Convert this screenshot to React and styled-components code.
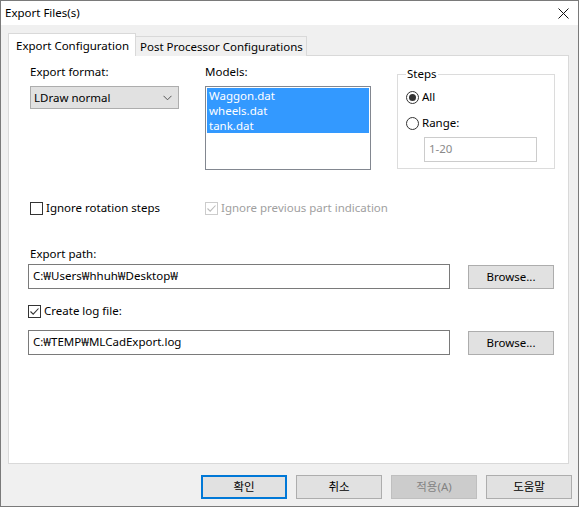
import React from "react";
import styled, { createGlobalStyle, css } from "styled-components";

const GlobalStyle = createGlobalStyle`
  html, body {
    margin: 0;
    padding: 0;
    background: #ffffff;
  }
  body {
    font-family: "Noto Sans", "Noto Sans CJK KR", sans-serif;
    font-size: 11.5px;
    color: #000;
  }
  * {
    box-sizing: border-box;
  }
`;

const Window = styled.div`
  width: 579px;
  height: 507px;
  border: 1px solid #7a7a7a;
  display: flex;
  flex-direction: column;
  background: #f0f0f0;
`;

const TitleBar = styled.div`
  height: 24px;
  background: #ffffff;
  display: flex;
  align-items: center;
  justify-content: space-between;
  padding: 0 9px 0 4px;
  line-height: 16px;
`;

const Body = styled.div`
  flex: 1;
  display: flex;
  flex-direction: column;
  padding: 8px 9px 0 7px;
`;

const TabStrip = styled.div`
  display: flex;
  align-items: flex-end;
  margin-bottom: -1px;
`;

const Tab = styled.div`
  position: relative;
  border: 1px solid #d9d9d9;
  border-bottom: none;
  line-height: 16px;
  white-space: nowrap;
  ${({ active }) =>
    active
      ? css`
          z-index: 1;
          height: 23px;
          padding: 4px 6px 0 7px;
          background: #ffffff;
        `
      : css`
          height: 20px;
          padding: 2px 3px 0 4px;
          margin-left: -1px;
          background: #f0f0f0;
        `}
`;

const Panel = styled.div`
  height: 409px;
  background: #ffffff;
  border: 1px solid #d9d9d9;
  padding: 8px 0 0 21px;
`;

const TopRow = styled.div`
  display: flex;
  align-items: flex-start;
`;

const Column = styled.div`
  width: ${({ w }) => w}px;
  display: flex;
  flex-direction: column;
`;

const Label = styled.div`
  line-height: 16px;
  white-space: nowrap;
  color: ${({ disabled }) => (disabled ? "#a0a0a0" : "#000")};
`;

const Combo = styled.div`
  margin-top: 6px;
  width: 149px;
  height: 23px;
  background: #e1e1e1;
  border: 1px solid #adadad;
  display: flex;
  align-items: center;
  justify-content: space-between;
  padding: 0 6px 0 3px;
  line-height: 16px;
`;

const ListBox = styled.div`
  margin-top: 6px;
  width: 166px;
  height: 84px;
  border: 1px solid #828790;
  padding: 1px;
  background: #ffffff;
`;

const ListItem = styled.div`
  height: 15px;
  line-height: 15px;
  padding-left: 2px;
  background: ${({ selected }) => (selected ? "#3399ff" : "transparent")};
  color: ${({ selected }) => (selected ? "#ffffff" : "#000")};
`;

const GroupBox = styled.fieldset`
  margin: 2px 0 0 0;
  width: 158px;
  height: 103px;
  border: 1px solid #dcdcdc;
  padding: 0 0 0 8px;
  min-width: 0;
`;

const Legend = styled.legend`
  padding: 0 1px;
  line-height: 16px;
  margin-left: 0;
`;

const RadioRow = styled.div`
  display: flex;
  align-items: center;
  gap: 3px;
  height: 16px;
  line-height: 16px;
  margin-top: ${({ top }) => top}px;
`;

const RadioCircle = styled.span`
  width: 13px;
  height: 13px;
  border-radius: 50%;
  border: 1px solid #333333;
  display: flex;
  align-items: center;
  justify-content: center;
  background: #ffffff;
  &::after {
    content: "";
    width: 7px;
    height: 7px;
    border-radius: 50%;
    background: ${({ checked }) => (checked ? "#333333" : "transparent")};
  }
`;

const TextField = styled.div`
  height: 25px;
  width: ${({ w }) => w}px;
  border: 1px solid ${({ disabled }) => (disabled ? "#cccccc" : "#7a7a7a")};
  color: ${({ disabled }) => (disabled ? "#8a8a8a" : "#000")};
  background: #ffffff;
  display: flex;
  align-items: center;
  padding: 0 0 1px 4px;
  line-height: 16px;
  white-space: nowrap;
`;

const RangeField = styled(TextField)`
  margin: 6px 0 0 18px;
`;

const CheckRow = styled.div`
  display: flex;
  align-items: center;
  margin-top: 30px;
`;

const CheckItem = styled.label`
  display: flex;
  align-items: center;
  gap: 3px;
  width: ${({ w }) => (w ? `${w}px` : "auto")};
  line-height: 16px;
  color: ${({ disabled }) => (disabled ? "#a0a0a0" : "#000")};
`;

const Box = styled.span`
  width: 13px;
  height: 13px;
  border: 1px solid ${({ disabled }) => (disabled ? "#cccccc" : "#333333")};
  background: #ffffff;
  display: flex;
  align-items: center;
  justify-content: center;
`;

const PathSection = styled.div`
  margin: 30px 0 0 -2px;
  display: flex;
  flex-direction: column;
`;

const PathLabel = styled(Label)`
  margin-left: 2px;
`;

const FieldRow = styled.div`
  display: flex;
  align-items: flex-end;
  gap: 18px;
  margin-top: ${({ top }) => top}px;
`;

const Button = styled.button`
  font-family: inherit;
  font-size: 11.5px;
  width: ${({ w }) => w || 86}px;
  height: 24px;
  padding: 0;
  background: ${({ disabled }) => (disabled ? "#cccccc" : "#e1e1e1")};
  color: ${({ disabled }) => (disabled ? "#838383" : "#000")};
  border: 1px solid ${({ disabled }) => (disabled ? "#bfbfbf" : "#adadad")};
  line-height: 16px;
  ${({ primary }) =>
    primary &&
    css`
      border: 2px solid #0078d7;
    `}
`;

const LogCheck = styled(CheckItem)`
  margin-top: 14px;
`;

const Footer = styled.div`
  display: flex;
  justify-content: flex-end;
  gap: 9px;
  padding: 11px 6px 0 0;
  margin-right: -9px;
`;

const CheckMark = ({ color }) => (
  <svg width="11" height="11" viewBox="0 0 11 11">
    <path d="M1.5 5.5 L4.2 8.2 L9.5 2.5" fill="none" stroke={color} strokeWidth="1.1" />
  </svg>
);

const Chevron = () => (
  <svg width="9" height="6" viewBox="0 0 9 6">
    <path d="M0.5 0.8 L4.5 4.8 L8.5 0.8" fill="none" stroke="#555" strokeWidth="1" />
  </svg>
);

const CloseIcon = () => (
  <svg width="11" height="11" viewBox="0 0 11 11">
    <path d="M0.5 0.5 L10.5 10.5 M10.5 0.5 L0.5 10.5" stroke="#111" strokeWidth="1" />
  </svg>
);

const Checkbox = ({ checked, disabled, children, w }) => (
  <CheckItem w={w} disabled={disabled}>
    <Box disabled={disabled}>{checked && <CheckMark color={disabled ? "#bbbbbb" : "#333333"} />}</Box>
    {children}
  </CheckItem>
);

export default function App() {
  return (
    <>
      <GlobalStyle />
      <Window>
        <TitleBar>
          <span>Export Files(s)</span>
          <CloseIcon />
        </TitleBar>
        <Body>
          <TabStrip>
            <Tab active>Export Configuration</Tab>
            <Tab>Post Processor Configurations</Tab>
          </TabStrip>
          <Panel>
            <TopRow>
              <Column w={175}>
                <Label>Export format:</Label>
                <Combo>
                  <span>LDraw normal</span>
                  <Chevron />
                </Combo>
              </Column>
              <Column w={192}>
                <Label>Models:</Label>
                <ListBox>
                  <ListItem selected>Waggon.dat</ListItem>
                  <ListItem selected>wheels.dat</ListItem>
                  <ListItem selected>tank.dat</ListItem>
                </ListBox>
              </Column>
              <GroupBox>
                <Legend>Steps</Legend>
                <RadioRow top={7}>
                  <RadioCircle checked />
                  All
                </RadioRow>
                <RadioRow top={10}>
                  <RadioCircle />
                  Range:
                </RadioRow>
                <RangeField w={113} disabled>
                  1-20
                </RangeField>
              </GroupBox>
            </TopRow>
            <CheckRow>
              <Checkbox w={175}>Ignore rotation steps</Checkbox>
              <Checkbox checked disabled>
                Ignore previous part indication
              </Checkbox>
            </CheckRow>
            <PathSection>
              <PathLabel>Export path:</PathLabel>
              <FieldRow top={2}>
                <TextField w={422}>C:₩Users₩hhuh₩Desktop₩</TextField>
                <Button>Browse...</Button>
              </FieldRow>
              <LogCheck>
                <Box>
                  <CheckMark color="#333333" />
                </Box>
                Create log file:
              </LogCheck>
              <FieldRow top={11}>
                <TextField w={422}>C:₩TEMP₩MLCadExport.log</TextField>
                <Button>Browse...</Button>
              </FieldRow>
            </PathSection>
          </Panel>
          <Footer>
            <Button primary>확인</Button>
            <Button>취소</Button>
            <Button disabled>적용(A)</Button>
            <Button>도움말</Button>
          </Footer>
        </Body>
      </Window>
    </>
  );
}
